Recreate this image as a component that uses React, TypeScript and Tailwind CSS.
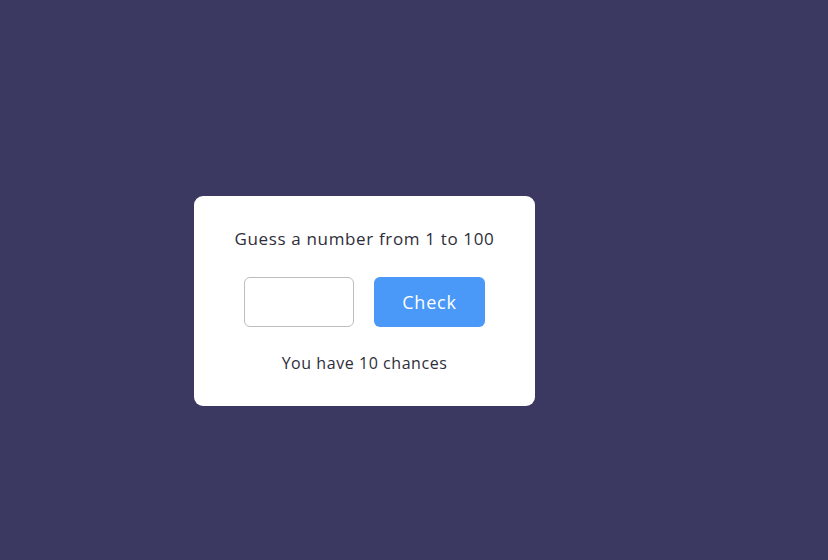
import React from "react";

export default function App() {
  return (
    <div
      className="w-full h-[560px] bg-[#3b3961] pt-[196px] pl-[194px]"
      style={{ fontFamily: '"Open Sans", "Noto Sans", sans-serif' }}
    >
      <div className="w-[341px] h-[210px] bg-white rounded-[9px] flex flex-col items-center pt-[30px]">
        <p className="text-[17px] leading-[25px] text-[#2e2e3a] tracking-[0.65px]">
          Guess a number from 1 to 100
        </p>
        <div className="flex gap-[20px] mt-[26px]">
          <input
            type="text"
            className="w-[110px] h-[50px] border border-[#bdbdbd] rounded-[6px] outline-none px-2 text-[18px]"
          />
          <button className="w-[111px] h-[50px] bg-[#4a98f7] rounded-[6px] text-white text-[18px] tracking-[0.8px]">
            Check
          </button>
        </div>
        <p className="mt-[24px] text-[16px] leading-[24px] text-[#2e2e3a] tracking-[0.55px]">
          You have 10 chances
        </p>
      </div>
    </div>
  );
}
